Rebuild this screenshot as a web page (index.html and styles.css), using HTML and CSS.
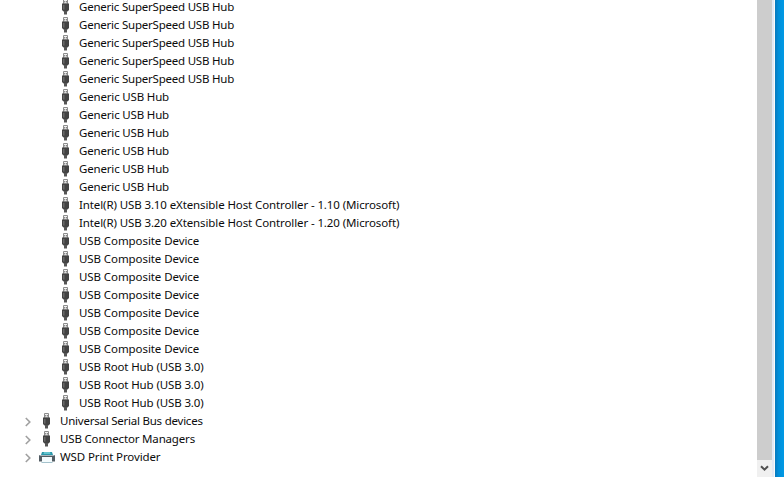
FILE: index.html
```
<!DOCTYPE html>
<html lang="en">
<head>
<meta charset="utf-8">
<title>Device Manager</title>
<link rel="stylesheet" href="styles.css">
</head>
<body>
<svg class="sprites" width="0" height="0" aria-hidden="true">
  <symbol id="usb" viewBox="0 0 9 16">
    <path d="M2.5.5h4V5h-4z" fill="#f2f2f2" stroke="#8c8c8c"/>
    <path d="M3.2 2h1v1.5h-1zM4.9 2h1v1.5h-1z" fill="#777"/>
    <path d="M1 4.5h7V11L6.5 12.5h-4L1 11z" fill="#434343"/>
    <path d="M2 6h1.5v4.5H2z" fill="#686868"/>
    <path d="M3 12h3v3.5H3z" fill="#555"/>
  </symbol>
  <symbol id="printer" viewBox="0 0 16 12">
    <path d="M3 1h10l1 3H2z" fill="#2b98aa"/>
    <path d="M5 1h6l.5 2h-7z" fill="#62c4ce"/>
    <path d="M0 4h16v6.5H0z" fill="#525c63"/>
    <path d="M.5 4h15v1H.5z" fill="#a9b5bb"/>
    <path d="M3 6h10v5.5H3z" fill="#f4fbfd"/>
    <path d="M2.5 11h11v.8h-11z" fill="#8fb3c0"/>
  </symbol>
  <symbol id="chevron" viewBox="0 0 6 10">
    <path d="M.8 1l4 4-4 4" fill="none" stroke="#a0a0a0" stroke-width="1.6"/>
  </symbol>
</svg>
<div class="screen">
  <main class="tree">
    <ul class="devices">
      <li class="speed"><svg class="usb"><use href="#usb"/></svg><span>Generic SuperSpeed USB Hub</span></li>
      <li class="speed"><svg class="usb"><use href="#usb"/></svg><span>Generic SuperSpeed USB Hub</span></li>
      <li class="speed"><svg class="usb"><use href="#usb"/></svg><span>Generic SuperSpeed USB Hub</span></li>
      <li class="speed"><svg class="usb"><use href="#usb"/></svg><span>Generic SuperSpeed USB Hub</span></li>
      <li class="speed"><svg class="usb"><use href="#usb"/></svg><span>Generic SuperSpeed USB Hub</span></li>
      <li><svg class="usb"><use href="#usb"/></svg><span>Generic USB Hub</span></li>
      <li><svg class="usb"><use href="#usb"/></svg><span>Generic USB Hub</span></li>
      <li><svg class="usb"><use href="#usb"/></svg><span>Generic USB Hub</span></li>
      <li><svg class="usb"><use href="#usb"/></svg><span>Generic USB Hub</span></li>
      <li><svg class="usb"><use href="#usb"/></svg><span>Generic USB Hub</span></li>
      <li><svg class="usb"><use href="#usb"/></svg><span>Generic USB Hub</span></li>
      <li class="host"><svg class="usb"><use href="#usb"/></svg><span>Intel(R) USB 3.10 eXtensible Host Controller - 1.10 (Microsoft)</span></li>
      <li class="host"><svg class="usb"><use href="#usb"/></svg><span>Intel(R) USB 3.20 eXtensible Host Controller - 1.20 (Microsoft)</span></li>
      <li class="composite"><svg class="usb"><use href="#usb"/></svg><span>USB Composite Device</span></li>
      <li class="composite"><svg class="usb"><use href="#usb"/></svg><span>USB Composite Device</span></li>
      <li class="composite"><svg class="usb"><use href="#usb"/></svg><span>USB Composite Device</span></li>
      <li class="composite"><svg class="usb"><use href="#usb"/></svg><span>USB Composite Device</span></li>
      <li class="composite"><svg class="usb"><use href="#usb"/></svg><span>USB Composite Device</span></li>
      <li class="composite"><svg class="usb"><use href="#usb"/></svg><span>USB Composite Device</span></li>
      <li class="composite"><svg class="usb"><use href="#usb"/></svg><span>USB Composite Device</span></li>
      <li class="root"><svg class="usb"><use href="#usb"/></svg><span>USB Root Hub (USB 3.0)</span></li>
      <li class="root"><svg class="usb"><use href="#usb"/></svg><span>USB Root Hub (USB 3.0)</span></li>
      <li class="root"><svg class="usb"><use href="#usb"/></svg><span>USB Root Hub (USB 3.0)</span></li>
    </ul>
    <ul class="categories">
      <li class="serial"><svg class="chevron"><use href="#chevron"/></svg><svg class="usb"><use href="#usb"/></svg><span>Universal Serial Bus devices</span></li>
      <li><svg class="chevron"><use href="#chevron"/></svg><svg class="usb"><use href="#usb"/></svg><span>USB Connector Managers</span></li>
      <li class="print"><svg class="chevron"><use href="#chevron"/></svg><svg class="printer"><use href="#printer"/></svg><span>WSD Print Provider</span></li>
    </ul>
  </main>
  <div class="scrollbar">
    <div class="thumb"></div>
    <div class="down"><svg width="9" height="7" viewBox="0 0 9 7"><path d="M1 1.2l3.5 3.5L8 1.2" fill="none" stroke="#505050" stroke-width="2"/></svg></div>
  </div>
  <div class="edge"></div>
  <div class="desktop"></div>
</div>
</body>
</html>
```
FILE: styles.css
```
body {
  margin: 0;
  background: #fff;
  color: #0c0c0c;
  font: 11.5px/16px "Noto Sans", "Open Sans", sans-serif;
}
.sprites { position: absolute; }
.screen {
  display: flex;
  height: 477px;
  overflow: hidden;
}
.tree {
  width: 757px;
  margin-top: -2px;
}
ul { margin: 0; padding: 0; list-style: none; }
li {
  display: flex;
  align-items: center;
  height: 18px;
  letter-spacing: -0.17px;
  white-space: nowrap;
}
.speed { letter-spacing: -0.22px; }
.host { letter-spacing: -0.11px; }
.composite { letter-spacing: -0.08px; }
.root { letter-spacing: -0.13px; }
.serial { letter-spacing: -0.23px; }
.print { letter-spacing: -0.12px; }
.devices li { padding-left: 61px; }
.categories li { padding-left: 25px; }
.usb { width: 9px; height: 16px; margin-right: 9px; }
.chevron { width: 6px; height: 10px; margin: 2px 11px 0 0; }
.printer { width: 16px; height: 12px; margin: 0 5px 0 -3px; }
.scrollbar {
  display: flex;
  flex-direction: column;
  width: 15px;
  background: #f0f0f0;
}
.thumb { height: 460px; background: #cdcdcd; }
.down {
  display: flex;
  flex: 1;
  align-items: center;
  justify-content: center;
}
.edge {
  width: 2px;
  border-right: 1px solid #fafafa;
  background: #e3e9f4;
}
.desktop {
  flex: 1;
  background: linear-gradient(90deg, #0878bd, #008fda 40%, #0099e5);
}
```
